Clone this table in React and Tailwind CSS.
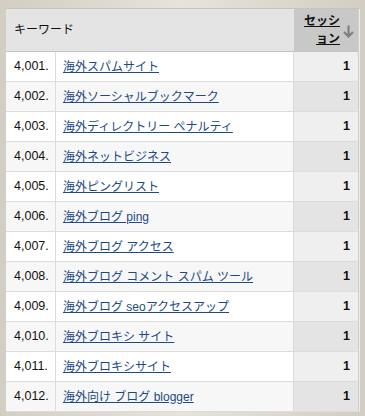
const rows = [
    ['4,001.', '海外スパムサイト'],
    ['4,002.', '海外ソーシャルブックマーク'],
    ['4,003.', '海外ディレクトリー ペナルティ'],
    ['4,004.', '海外ネットビジネス'],
    ['4,005.', '海外ピングリスト'],
    ['4,006.', '海外ブログ ping'],
    ['4,007.', '海外ブログ アクセス'],
    ['4,008.', '海外ブログ コメント スパム ツール'],
    ['4,009.', '海外ブログ seoアクセスアップ'],
    ['4,010.', '海外ブロキシ サイト'],
    ['4,011.', '海外ブロキシサイト'],
    ['4,012.', '海外向け ブログ blogger'],
];

const font = { fontFamily: '"Liberation Sans", Arial, "Noto Sans CJK JP", sans-serif' };

export default function App() {
    return (
        <div
            className="w-[365px] h-[416px] overflow-hidden bg-gradient-to-r from-[#d2cec3] via-[#e6e3db] to-[#d2cec3] pt-[8px] pl-[6px] pr-[5px] pb-[4px]"
            style={font}
        >
            <div className="flex h-full bg-[#d9d5ca] border-t border-[#c8c4b8]">
                <div className="w-[352px] bg-white text-[12.5px] text-[#111]">
                    {/* header */}
                    <div className="grid grid-cols-[288px_64px] h-[43px] border-b border-[#c4c4c4]">
                        <div className="bg-[#e4e4e4] flex items-center pl-[8px] text-[12px]">キーワード</div>
                        <div className="bg-[#c8c8c8] flex items-center justify-end pr-[4px] gap-[3px]">
                            <div className="flex flex-col items-end font-bold underline leading-[18px] text-[12px]">
                                <span>セッシ</span>
                                <span>ョン</span>
                            </div>
                            <svg width="11" height="13" viewBox="0 0 11 13" className="mt-[2px]">
                                <path d="M5.5 0.5v11M1 7l4.5 4.5 4.5-4.5" stroke="#808080" strokeWidth="2.2" fill="none" />
                            </svg>
                        </div>
                    </div>
                    {rows.map(([n, k], i) => (
                        <div
                            key={n}
                            className={`grid grid-cols-[50px_238px_64px] h-[30px] border-b border-[#dcdcdc] ${i % 2 ? 'bg-[#f7f7f7]' : 'bg-white'}`}
                        >
                            <div className="flex items-center pl-[8px] border-r border-[#dcdcdc]">{n}</div>
                            <div className="flex items-center pl-[7px] border-r border-[#dcdcdc] text-[12px]">
                                <a href="#" className="text-[#1c4a84] underline">{k}</a>
                            </div>
                            <div className={`flex items-center justify-end pr-[8px] font-bold ${i % 2 ? 'bg-[#e4e4e4]' : 'bg-[#efefef]'}`}>1</div>
                        </div>
                    ))}
                </div>
                <div className="w-[2px] bg-[#ececec] border-l border-[#cfcfcf]" />
            </div>
        </div>
    );
}
